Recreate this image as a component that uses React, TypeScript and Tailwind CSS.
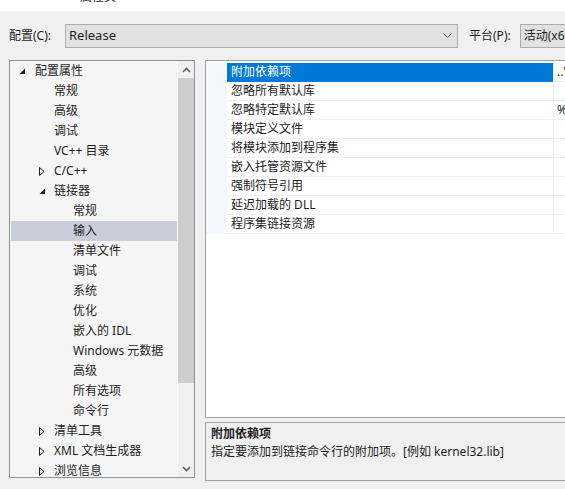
import React from "react"

const font = "font-['Noto_Sans','Noto_Sans_CJK_SC',sans-serif]"

type Node = { label: string; level: number; toggle?: "open" | "closed"; selected?: boolean }

const tree: Node[] = [
  { label: "配置属性", level: 0, toggle: "open" },
  { label: "常规", level: 1 },
  { label: "高级", level: 1 },
  { label: "调试", level: 1 },
  { label: "VC++ 目录", level: 1 },
  { label: "C/C++", level: 1, toggle: "closed" },
  { label: "链接器", level: 1, toggle: "open" },
  { label: "常规", level: 2 },
  { label: "输入", level: 2, selected: true },
  { label: "清单文件", level: 2 },
  { label: "调试", level: 2 },
  { label: "系统", level: 2 },
  { label: "优化", level: 2 },
  { label: "嵌入的 IDL", level: 2 },
  { label: "Windows 元数据", level: 2 },
  { label: "高级", level: 2 },
  { label: "所有选项", level: 2 },
  { label: "命令行", level: 2 },
  { label: "清单工具", level: 1, toggle: "closed" },
  { label: "XML 文档生成器", level: 1, toggle: "closed" },
  { label: "浏览信息", level: 1, toggle: "closed" },
]

const props = [
  { name: "附加依赖项", value: "..\\", selected: true },
  { name: "忽略所有默认库", value: "" },
  { name: "忽略特定默认库", value: "%" },
  { name: "模块定义文件", value: "" },
  { name: "将模块添加到程序集", value: "" },
  { name: "嵌入托管资源文件", value: "" },
  { name: "强制符号引用", value: "" },
  { name: "延迟加载的 DLL", value: "" },
  { name: "程序集链接资源", value: "" },
]

const Toggle = ({ kind }: { kind: "open" | "closed" }) =>
  kind === "open" ? (
    <svg width="7" height="7" viewBox="0 0 7 7">
      <path d="M6 0.5 L6 6 L0.5 6 Z" fill="#1e1e1e" />
    </svg>
  ) : (
    <svg width="6" height="9" viewBox="0 0 6 9">
      <path d="M0.5 0.5 L5 4.5 L0.5 8.5 Z" fill="none" stroke="#1e1e1e" strokeWidth="1" />
    </svg>
  )

const Chevron = ({ up }: { up?: boolean }) => (
  <svg width="9" height="6" viewBox="0 0 9 6">
    <path d={up ? "M1 5 L4.5 1.5 L8 5" : "M1 1 L4.5 4.5 L8 1"} fill="none" stroke="#606060" strokeWidth="1.6" />
  </svg>
)

const indent: Record<number, string> = { 0: "pl-[24px]", 1: "pl-[43px]", 2: "pl-[62px]" }
const toggleLeft: Record<number, string> = { 0: "left-[8px]", 1: "left-[28px]" }

export default function App() {
  return (
    <div className={`w-[565px] h-[489px] overflow-hidden bg-[#f0f0f0] text-[12px] text-[#1e1e1e] ${font}`}>
      {/* window title, mostly scrolled off */}
      <div className="h-[11px] bg-white overflow-hidden pl-[80px]">
        <div className="-mt-[12px] leading-[17px]">属性页</div>
      </div>

      {/* configuration row */}
      <div className="h-[49px] flex items-center pl-[9px] whitespace-nowrap">
        <span>配置(C):</span>
        <div className="ml-[14px] w-[393px] h-[24px] border border-[#adadad] bg-[#e1e1e1] flex items-center justify-between pl-[3px] pr-[5px] shrink-0">
          <span className="text-[13px]">Release</span>
          <svg width="9" height="6" viewBox="0 0 9 6">
            <path d="M0.5 0.5 L4.5 4.5 L8.5 0.5" fill="none" stroke="#555" strokeWidth="1" />
          </svg>
        </div>
        <span className="ml-[11px]">平台(P):</span>
        <div className="ml-[9px] w-[120px] h-[24px] border border-[#adadad] bg-[#e1e1e1] flex items-center pl-[3px] shrink-0">
          <span>活动(x64)</span>
        </div>
      </div>

      <div className="flex pl-[9px]">
        {/* tree */}
        <div className="w-[186px] h-[418px] border border-[#8e9196] bg-[#f5f5f5] flex overflow-hidden shrink-0">
          <div className="flex-1 pl-[1px]">
            {tree.map((n, i) => (
              <div
                key={i}
                className={`relative h-[20px] flex items-center ${indent[n.level]} ${n.selected ? "bg-[#cbcdda]" : ""}`}
              >
                {n.toggle && (
                  <span className={`absolute top-0 h-[20px] flex items-center ${toggleLeft[n.level]}`}>
                    <Toggle kind={n.toggle} />
                  </span>
                )}
                <span className="whitespace-nowrap">{n.label}</span>
              </div>
            ))}
          </div>
          <div className="w-[17px] border-l border-[#fbfbfb] bg-[#f0f0f0] flex flex-col">
            <div className="h-[17px] flex items-center justify-center">
              <Chevron up />
            </div>
            <div className="h-[305px] bg-[#cdcdcd]" />
            <div className="flex-1" />
            <div className="h-[17px] flex items-center justify-center">
              <Chevron />
            </div>
          </div>
        </div>

        {/* right side */}
        <div className="ml-[10px] w-[370px] shrink-0 flex flex-col">
          <div className="h-[358px] border border-[#a0a0a0] bg-white pt-[2px]">
            {props.map((p, i) => (
              <div key={i} className="flex h-[19px]">
                <div className="w-[21px] bg-[#f4f7fb]" />
                <div
                  className={`w-[326px] flex items-center pl-[4px] border-b ${p.selected ? "bg-[#0078d7] text-white border-[#0078d7]" : "border-[#f0f0f0]"}`}
                >
                  {p.name}
                </div>
                <div className="flex-1 flex items-center pl-[3px] border-l border-b border-[#f0f0f0]">{p.value}</div>
              </div>
            ))}
          </div>
          <div className="mt-[4px] h-[59px] border border-[#a0a0a0] bg-[#f0f0f0] pl-[5px] pt-[2px] leading-[18px]">
            <div className="font-bold">附加依赖项</div>
            <div className="whitespace-nowrap">指定要添加到链接命令行的附加项。[例如 kernel32.lib]</div>
          </div>
        </div>
      </div>
    </div>
  )
}
